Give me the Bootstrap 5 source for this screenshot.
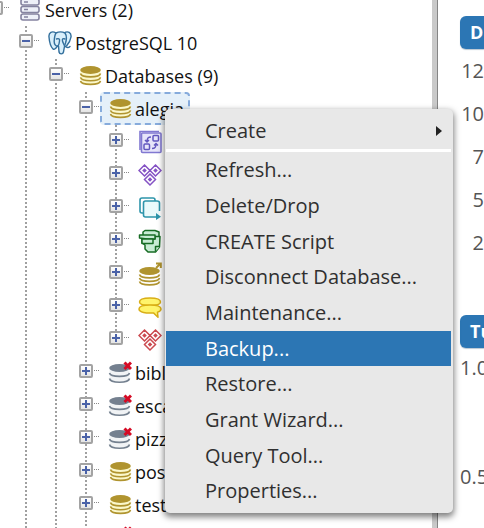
<!DOCTYPE html>
<html lang="en">
<head>
<meta charset="utf-8">
<meta name="viewport" content="width=device-width, initial-scale=1">
<title>Database browser</title>
<link href="https://cdn.jsdelivr.net/npm/bootstrap@5.3.0/dist/css/bootstrap.min.css" rel="stylesheet">
<style>
  body { font-family: "Open Sans", "Noto Sans", sans-serif; color: #111; background: #fff; }
  .browser { flex: 1 1 0; min-width: 0; overflow: hidden; }
  .tree-level { margin: 0 0 0 30px; background: repeating-linear-gradient(#a0a0a0 0 2px, #fff 2px 4px) 6px 0 / 2px 100% no-repeat; }
  .tree-leaves { background-size: 2px calc(100% - 17px); }
  .tree-root { margin: -7px 0 0 -11px; }
  .tree-row { height: 33px; font-size: 18px; line-height: 26px; white-space: nowrap; }
  .toggle { width: 14px; height: 14px; padding: 0; border: 2px solid #a3a3a3; border-radius: 2px; background: linear-gradient(#fff, #e4e4e4); margin-bottom: 4px; }
  .toggle svg { display: block; width: 10px; height: 10px; }
  .twig { width: 7px; height: 1px; margin-bottom: 4px; background: repeating-linear-gradient(90deg, transparent 0 1px, #888 1px 2px); }
  .node { height: 33px; color: #111; border: 2px solid transparent; border-radius: 4px; padding: 0 4px 0 6px; gap: 3px; }
  .node svg { width: 24px; height: 24px; flex: none; }
  .node.selected { background: #e5f0f9; border: 2px dashed #86abdc; }
  .splitter { width: 6px; background: #c9c9c9; border-right: 1px solid #858585; }
  .charts { width: 46px; padding-left: 22px; overflow: hidden; background: #fff; font-size: 20px; color: #555; }
  .charts h2 { margin: 0; height: 33px; padding-left: 10px; font-size: 18px; line-height: 33px; font-weight: 700; color: #fff; background: #2c76b4; border-radius: 6px 0 0 6px; box-shadow: 0 1px 1px #b8c6d2; }
  .first-chart { padding-top: 16px; height: 315px; }
  .ticks { line-height: 43px; }
  .ticks-wide { line-height: 40px; }
  .half-tick { margin-top: 69px; }
  .context { left: 165px; right: 31px; top: 109px; padding: 4px 2px 4px 1px; background: #e8e8e8; border-radius: 5px; box-shadow: 0 3px 6px 1px rgba(0,0,0,.5); }
  .context button { display: flex; align-items: center; justify-content: space-between; width: 100%; height: 36px; padding: 0 9px 0 39px; border: 0; background: transparent; color: #303030; font-size: 20px; line-height: 36px; text-align: left; }
  .context hr ~ button:nth-of-type(3n+1) { height: 35px; }
  .context button.current { background: #2c76b4; color: #fff; }
  .context hr { height: 3px; margin: 0; border: 0; background: #fff; opacity: 1; }
</style>
</head>
<body>
<svg class="d-none" aria-hidden="true">
  <symbol id="minus" viewBox="0 0 10 10"><path d="M1 5h8" stroke="#4a62a8" stroke-width="2"/></symbol>
  <symbol id="plus" viewBox="0 0 10 10"><path d="M1 5h8M5 1v8" stroke="#4a62a8" stroke-width="2"/></symbol>
  <symbol id="servers" viewBox="0 0 24 24"><g fill="#eef0f8" stroke="#8583a0" stroke-width="1.6"><rect x="3" y="1" width="18" height="6" rx="2"/><rect x="3" y="8.5" width="18" height="6" rx="2"/><rect x="3" y="16" width="18" height="6" rx="2"/></g><path d="M6 4h4M6 11.500h4M6 19h4" stroke="#8583a0" stroke-width="1.600"/></symbol>
  <symbol id="elephant" viewBox="0 0 24 24"><g fill="#d9effb" stroke="#336f9c" stroke-width="1.400" stroke-linejoin="round" stroke-linecap="round"><path d="M8 2C4-.5.500 1.500 1 6c.3 4 2 10 4 12 1.500 1.200 3-1 4.500-3"/><path d="M16 2c4-2.500 7.500-.5 7 4-.4 3-2 6-4.500 9-1.500 1-2 .5-2.500 0"/><path d="M8 2c3-1.500 6-1.500 9 0 2 3 1.500 7 .5 10-1.200 3-1.500 6-2 9-.5 2.500-4 2.500-4.500 0l-.5-6c-3 .5-4.500-2-4.300-5C6.400 7 6.600 4 8 2z"/><path d="M8.500 8c2-1 3.500 0 3 2-.2 2-.5 4-1.500 5M17 8c-2-1-3 0-2.500 2s1.500 3 1.500 4M18 16c1.500 1 3 .5 4-.5" fill="none"/></g></symbol>
  <symbol id="db" viewBox="0 0 24 24"><path d="M2.500 6v11c0 5 20 5 20 0V6z" fill="#fbf8cc"/><ellipse cx="12.500" cy="6" rx="10.300" ry="3.900" fill="#b0942f"/><path d="M2.500 9.500c1 4.500 19 4.500 20 0M2.500 13.300c1 4.500 19 4.500 20 0M2.500 17c1 4.500 19 4.500 20 0" fill="none" stroke="#b0942f" stroke-width="1.600"/></symbol>
  <symbol id="dboff" viewBox="0 0 24 24"><path d="M1.500 7v10c0 5 20 5 20 0V7z" fill="#f1f3f5"/><ellipse cx="11.500" cy="7" rx="10.300" ry="4" fill="#74808f"/><path d="M1.500 12c1 4.500 19 4.500 20 0M1.500 17.500c1 5 19 5 20 0" fill="none" stroke="#74808f" stroke-width="1.600"/><path d="M16.500 1.500l6.500 6.500M23 1.500L16.500 8" stroke="#d50b25" stroke-width="3"/></symbol>
  <symbol id="cast" viewBox="0 0 24 24"><path d="M2 20V1.500h19" fill="none" stroke="#8178d1" stroke-width="1.600"/><rect x="3.500" y="3" width="19.500" height="19.500" rx="1" fill="#e7e5fa" stroke="#8178d1" stroke-width="1.600"/><g fill="none" stroke="#6257be" stroke-width="1.500"><rect x="15" y="5.500" width="5.500" height="5.500" rx="1"/><rect x="6" y="14" width="5.500" height="5.500" rx="1"/><path d="M13 7c-3 0-4 1-4 4.500M7 10l2 2 2-2M14 18.500c3 0 4-1 4-4.500m-2 1.500l2-2 2 2"/></g></symbol>
  <symbol id="diamonds" viewBox="0 0 24 24"><g fill="#fff" stroke="currentColor" stroke-width="1.500"><path d="M6.500 2l5.500 5.500-5.500 5.500L1 7.500zM17.500 2L23 7.500 17.500 13 12 7.500zM12 11l5.500 5.500L12 22l-5.500-5.500z"/></g><path d="M6.500 5.200l2.300 2.300-2.300 2.300-2.300-2.300zM17.500 5.200l2.300 2.300-2.300 2.300-2.300-2.300zM12 14.200l2.300 2.300-2.300 2.300-2.300-2.300z" fill="currentColor"/></symbol>
  <symbol id="extension" viewBox="0 0 24 24"><g fill="none" stroke="#2e95ab" stroke-width="1.600"><path d="M5 17H4q-2 0-2-2V4q0-2 2-2h11q2 0 2 2v1"/><path d="M20 21H7.500q-2 0-2-2V7q0-2 2-2H19q2.500 0 2.500 2v8" fill="#eafafb"/></g><path d="M18 17l5 3.700-5 3.300z" fill="#2e95ab"/></symbol>
  <symbol id="language" viewBox="0 0 24 24"><g fill="#c8ecd4" stroke="#176c24" stroke-width="1.500" stroke-linejoin="round"><path d="M5 6V3l2-1.500h10L21 3v6H6z"/><path d="M4 9v5l3 2v4l3 3h7.500l4-5L22 7.500h-5V10z"/><path d="M1.500 6H17v4H9L1.500 9z"/><path d="M4 10h11v4.500H4zM17.500 22.500V17.500h4.500"/></g></symbol>
  <symbol id="publish" viewBox="0 0 24 24"><ellipse cx="11.500" cy="9" rx="10.300" ry="4" fill="#b0942f"/><path d="M1.500 12.500c1 4.500 19 4.500 20 0M1.500 16c1 4.500 19 4.500 20 0M1.500 19.500c1 4.500 19 4.500 20 0" fill="none" stroke="#b0942f" stroke-width="1.600"/><path d="M18 6l4.500-4.500M18 1.500h4.800V6" fill="none" stroke="#b0942f" stroke-width="2"/></symbol>
  <symbol id="schemas" viewBox="0 0 24 24"><g fill="#fff46b" stroke="#d9ae16" stroke-width="1.500" stroke-linejoin="round"><path d="M12 10.500c-5 0-10.500-.5-10.500-3.500S7 3 12 3s10.500 1 10.500 4-5.500 3.500-10.500 3.500z"/><path d="M12 10c4 0 11 .5 11 4 0 1.500-1.200 2.500-3.500 3.200l.5 5-4.500-4.300c-7 .6-14.500-.4-14.500-3.900S8 10 12 10z"/></g></symbol>
</svg>

<div class="d-flex vh-100 overflow-hidden position-relative">
  <nav class="browser" aria-label="Browser">
    <ul class="list-unstyled tree-level tree-root">
      <li>
        <div class="tree-row d-flex align-items-center"><button class="toggle" aria-label="Collapse Servers"><svg><use href="#minus"/></svg></button><span class="twig"></span><a href="#" class="node d-flex align-items-center text-decoration-none"><svg><use href="#servers"/></svg>Servers (2)</a></div>
        <ul class="list-unstyled tree-level">
          <li>
            <div class="tree-row d-flex align-items-center"><button class="toggle" aria-label="Collapse PostgreSQL 10"><svg><use href="#minus"/></svg></button><span class="twig"></span><a href="#" class="node d-flex align-items-center text-decoration-none"><svg><use href="#elephant"/></svg>PostgreSQL 10</a></div>
            <ul class="list-unstyled tree-level">
              <li>
                <div class="tree-row d-flex align-items-center"><button class="toggle" aria-label="Collapse Databases"><svg><use href="#minus"/></svg></button><span class="twig"></span><a href="#" class="node d-flex align-items-center text-decoration-none"><svg><use href="#db"/></svg>Databases (9)</a></div>
                <ul class="list-unstyled tree-level">
                  <li>
                    <div class="tree-row d-flex align-items-center"><button class="toggle" aria-label="Collapse alegia"><svg><use href="#minus"/></svg></button><span class="twig"></span><a href="#" class="node selected d-flex align-items-center text-decoration-none"><svg><use href="#db"/></svg>alegia</a></div>
                    <ul class="list-unstyled tree-level tree-leaves">
                      <li class="tree-row d-flex align-items-center"><button class="toggle" aria-label="Expand casts"><svg><use href="#plus"/></svg></button><span class="twig"></span><a href="#" aria-label="Casts" class="node d-flex align-items-center"><svg><use href="#cast"/></svg></a></li>
                      <li class="tree-row d-flex align-items-center"><button class="toggle" aria-label="Expand catalogs"><svg><use href="#plus"/></svg></button><span class="twig"></span><a href="#" aria-label="Catalogs" class="node d-flex align-items-center"><svg color="#8552c4"><use href="#diamonds"/></svg></a></li>
                      <li class="tree-row d-flex align-items-center"><button class="toggle" aria-label="Expand extensions"><svg><use href="#plus"/></svg></button><span class="twig"></span><a href="#" aria-label="Extensions" class="node d-flex align-items-center"><svg><use href="#extension"/></svg></a></li>
                      <li class="tree-row d-flex align-items-center"><button class="toggle" aria-label="Expand foreign data wrappers"><svg><use href="#plus"/></svg></button><span class="twig"></span><a href="#" aria-label="Foreign data wrappers" class="node d-flex align-items-center"><svg><use href="#language"/></svg></a></li>
                      <li class="tree-row d-flex align-items-center"><button class="toggle" aria-label="Expand publications"><svg><use href="#plus"/></svg></button><span class="twig"></span><a href="#" aria-label="Publications" class="node d-flex align-items-center"><svg><use href="#publish"/></svg></a></li>
                      <li class="tree-row d-flex align-items-center"><button class="toggle" aria-label="Expand languages"><svg><use href="#plus"/></svg></button><span class="twig"></span><a href="#" aria-label="Languages" class="node d-flex align-items-center"><svg><use href="#schemas"/></svg></a></li>
                      <li class="tree-row d-flex align-items-center"><button class="toggle" aria-label="Expand schemas"><svg><use href="#plus"/></svg></button><span class="twig"></span><a href="#" aria-label="Schemas" class="node d-flex align-items-center"><svg color="#cb4a50"><use href="#diamonds"/></svg></a></li>
                    </ul>
                  </li>
                  <li class="tree-row d-flex align-items-center"><button class="toggle" aria-label="Expand bibl"><svg><use href="#plus"/></svg></button><span class="twig"></span><a href="#" class="node d-flex align-items-center text-decoration-none"><svg><use href="#dboff"/></svg>bibl</a></li>
                  <li class="tree-row d-flex align-items-center"><button class="toggle" aria-label="Expand esca"><svg><use href="#plus"/></svg></button><span class="twig"></span><a href="#" class="node d-flex align-items-center text-decoration-none"><svg><use href="#dboff"/></svg>esca</a></li>
                  <li class="tree-row d-flex align-items-center"><button class="toggle" aria-label="Expand pizz"><svg><use href="#plus"/></svg></button><span class="twig"></span><a href="#" class="node d-flex align-items-center text-decoration-none"><svg><use href="#dboff"/></svg>pizz</a></li>
                  <li class="tree-row d-flex align-items-center"><button class="toggle" aria-label="Expand pos"><svg><use href="#plus"/></svg></button><span class="twig"></span><a href="#" class="node d-flex align-items-center text-decoration-none"><svg><use href="#db"/></svg>pos</a></li>
                  <li class="tree-row d-flex align-items-center"><button class="toggle" aria-label="Expand test"><svg><use href="#plus"/></svg></button><span class="twig"></span><a href="#" class="node d-flex align-items-center text-decoration-none"><svg><use href="#db"/></svg>test</a></li>
                  <li class="tree-row d-flex align-items-center"><button class="toggle" aria-label="Expand database"><svg><use href="#plus"/></svg></button><span class="twig"></span><a href="#" aria-label="Database" class="node d-flex align-items-center"><svg><use href="#dboff"/></svg></a></li>
                </ul>
              </li>
            </ul>
          </li>
        </ul>
      </li>
    </ul>
  </nav>
  <div class="splitter flex-shrink-0"></div>
  <main class="charts flex-shrink-0">
    <section class="first-chart">
      <h2>D</h2>
      <div class="ticks text-end"><div>12</div><div>10</div><div>7</div><div>5</div><div>2</div></div>
    </section>
    <section>
      <h2>Tu</h2>
      <div class="ticks-wide"><div>1.0</div><div class="half-tick">0.5</div></div>
    </section>
  </main>

  <div class="context position-absolute" role="menu">
    <button role="menuitem">Create<svg width="6" height="10" aria-hidden="true"><path d="M0 0l6 5-6 5z" fill="#222"/></svg></button>
    <hr>
    <button role="menuitem">Refresh...</button>
    <button role="menuitem">Delete/Drop</button>
    <button role="menuitem">CREATE Script</button>
    <button role="menuitem">Disconnect Database...</button>
    <button role="menuitem">Maintenance...</button>
    <button role="menuitem" class="current">Backup...</button>
    <button role="menuitem">Restore...</button>
    <button role="menuitem">Grant Wizard...</button>
    <button role="menuitem">Query Tool...</button>
    <button role="menuitem">Properties...</button>
  </div>
</div>
<script src="https://cdn.jsdelivr.net/npm/bootstrap@5.3.0/dist/js/bootstrap.bundle.min.js"></script>
</body>
</html>
